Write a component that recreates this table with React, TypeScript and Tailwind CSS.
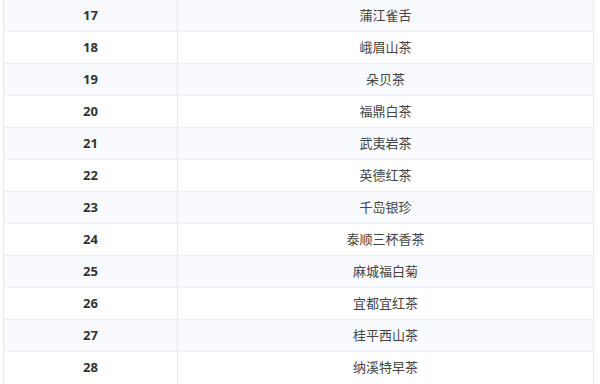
const rows: [number, string][] = [
  [17, "蒲江雀舌"],
  [18, "峨眉山茶"],
  [19, "朵贝茶"],
  [20, "福鼎白茶"],
  [21, "武夷岩茶"],
  [22, "英德红茶"],
  [23, "千岛银珍"],
  [24, "泰顺三杯香茶"],
  [25, "麻城福白菊"],
  [26, "宜都宜红茶"],
  [27, "桂平西山茶"],
  [28, "纳溪特早茶"],
];

export default function App() {
  return (
    <div className="h-[384px] w-[600px] overflow-hidden bg-white pl-[3px] font-['Noto_Sans','Noto_Sans_CJK_SC',sans-serif]">
      <div className="w-[591px] border-x border-b border-[#e6e9ee]">
        {rows.map(([n, name], i) => (
          <div
            key={n}
            className={`flex h-8 border-b border-[#eceff3] last:border-b-0 ${
              i % 2 === 0 ? "bg-[#f8fafd]" : "bg-white"
            }`}
          >
            <div className="flex w-[174px] items-center justify-center border-r border-[#e6e9ee] text-[13px] font-bold text-[#333]">
              {n}
            </div>
            <div className="flex flex-1 items-center justify-center text-[13px] text-[#444]">
              {name}
            </div>
          </div>
        ))}
      </div>
    </div>
  );
}
